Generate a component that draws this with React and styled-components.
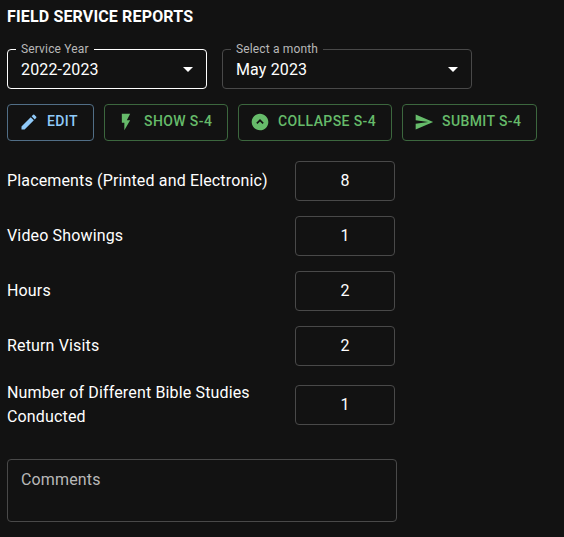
import React from 'react';
import styled, { createGlobalStyle } from 'styled-components';

const GlobalStyle = createGlobalStyle`
  *, *::before, *::after { box-sizing: border-box; }
  body {
    margin: 0;
    background: #121212;
    color: #fff;
    font-family: Roboto, sans-serif;
    font-size: 16px;
    letter-spacing: 0.15px;
  }
`;

const Page = styled.main`
  height: 537px;
  padding: 5px 7px 0;
  overflow: hidden;
  background: #121212;
`;

const Title = styled.h1`
  margin: 0;
  font-size: 16px;
  line-height: 24px;
  font-weight: 700;
`;

const Selects = styled.div`
  display: flex;
  gap: 15px;
  margin-top: 20px;
`;

const SelectBox = styled.div`
  position: relative;
  display: flex;
  align-items: center;
  justify-content: space-between;
  width: ${(p) => p.$width}px;
  height: 40px;
  padding: 0 6px 0 13px;
  border: 1px solid ${(p) => (p.$active ? '#fff' : '#494949')};
  border-radius: 4px;
  line-height: 23px;
`;

const Legend = styled.span`
  position: absolute;
  top: -9px;
  left: 8px;
  padding: 0 5px;
  background: #121212;
  color: #b8b8b8;
  font-size: 12px;
  line-height: 16px;
  white-space: nowrap;
`;

const Icon = styled.svg`
  width: ${(p) => p.$size || 20}px;
  height: ${(p) => p.$size || 20}px;
  fill: currentColor;
  flex: none;
`;

const Actions = styled.div`
  display: flex;
  gap: 10px;
  margin-top: 15px;
`;

const Button = styled.button`
  display: flex;
  align-items: center;
  gap: 8px;
  width: ${(p) => p.$width}px;
  height: 37px;
  padding: 0 0 1px 11px;
  border: 1px solid ${(p) => (p.$primary ? '#516e86' : '#3c673e')};
  border-radius: 4px;
  background: transparent;
  color: ${(p) => (p.$primary ? '#90caf9' : '#66bb6a')};
  font: 500 14px/24px Roboto, sans-serif;
  letter-spacing: 0.4px;
  white-space: nowrap;
`;

const ButtonText = styled.span`
  padding-bottom: 2px;
`;

const Fields = styled.div`
  display: flex;
  flex-direction: column;
  gap: 15px;
  margin-top: 20px;
`;

const Field = styled.label`
  display: grid;
  grid-template-columns: 273px 100px;
  column-gap: 15px;
  align-items: center;
  min-height: 40px;
  line-height: 24px;
`;

const Value = styled.input`
  width: 100px;
  height: 40px;
  padding: 0 0 1px;
  border: 1px solid #494949;
  border-radius: 4px;
  outline: none;
  background: transparent;
  color: #fff;
  font: 400 16px/23px Roboto, sans-serif;
  text-align: center;
`;

const Comments = styled.textarea`
  display: block;
  width: 390px;
  height: 63px;
  margin-top: 30px;
  padding: 8px 13px;
  border: 1px solid #494949;
  border-radius: 4px;
  outline: none;
  resize: none;
  background: transparent;
  color: #fff;
  font: 400 16px/23px Roboto, sans-serif;
  letter-spacing: inherit;
  &::placeholder { color: #b8b8b8; opacity: 1; }
`;

const paths = {
  edit: 'M3 17.25V21h3.75L17.81 9.94l-3.75-3.75L3 17.25zM20.71 7.04c.39-.39.39-1.02 0-1.41l-2.34-2.34a.9959.9959 0 0 0-1.41 0l-1.83 1.83 3.75 3.75 1.83-1.83z',
  bolt: 'M7 2v11h3v9l7-12h-4l4-8z',
  collapse: 'M12 22c5.52 0 10-4.48 10-10S17.52 2 12 2 2 6.48 2 12s4.48 10 10 10zm0-13.5 4.5 4.5-1.42 1.41L12 11.33l-3.08 3.08L7.5 13 12 8.5z',
  send: 'M2.01 21 23 12 2.01 3 2 10l15 2-15 2z',
  arrow: 'm7 10 5 5 5-5z',
};

const Glyph = ({ name, size }) => (
  <Icon viewBox="0 0 24 24" $size={size} aria-hidden="true">
    <path d={paths[name]} />
  </Icon>
);

const Select = ({ label, value, width, active }) => (
  <SelectBox $width={width} $active={active}>
    <Legend>{label}</Legend>
    {value}
    <Glyph name="arrow" size={24} />
  </SelectBox>
);

const actions = [
  { icon: 'edit', text: 'EDIT', width: 87, primary: true },
  { icon: 'bolt', text: 'SHOW S-4', width: 124 },
  { icon: 'collapse', text: 'COLLAPSE S-4', width: 154 },
  { icon: 'send', text: 'SUBMIT S-4', width: 135 },
];

const fields = [
  ['Placements (Printed and Electronic)', 8],
  ['Video Showings', 1],
  ['Hours', 2],
  ['Return Visits', 2],
  ['Number of Different Bible Studies Conducted', 1],
];

export default function App() {
  return (
    <>
      <GlobalStyle />
      <Page>
        <Title>FIELD SERVICE REPORTS</Title>
        <Selects>
          <Select label="Service Year" value="2022-2023" width={200} active />
          <Select label="Select a month" value="May 2023" width={250} />
        </Selects>
        <Actions>
          {actions.map((a) => (
            <Button key={a.text} $width={a.width} $primary={a.primary}>
              <Glyph name={a.icon} />
              <ButtonText>{a.text}</ButtonText>
            </Button>
          ))}
        </Actions>
        <Fields>
          {fields.map(([label, value]) => (
            <Field key={label}>
              {label}
              <Value defaultValue={value} />
            </Field>
          ))}
        </Fields>
        <Comments placeholder="Comments" />
      </Page>
    </>
  );
}
